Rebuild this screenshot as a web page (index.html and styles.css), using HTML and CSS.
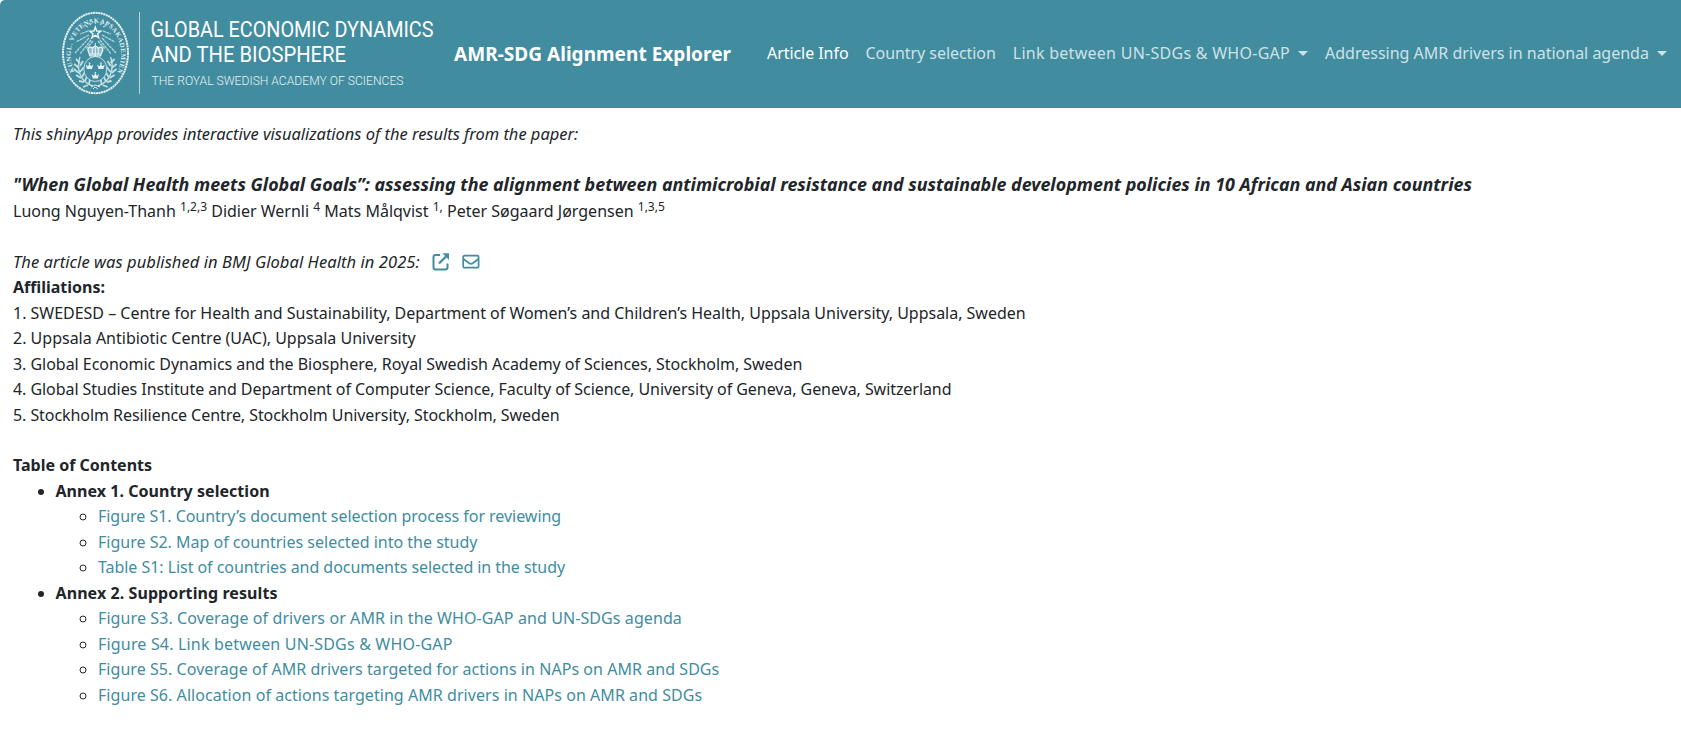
FILE: index.html
```html
<!DOCTYPE html>
<html lang="en">
<head>
<meta charset="utf-8">
<title>AMR-SDG Alignment Explorer</title>
<link rel="stylesheet" href="styles.css">
</head>
<body>
<header class="navbar">
  <svg class="logo" viewBox="55 0 385 108" width="385" height="108">
    <defs>
      <path id="ring" d="M74.500 71.500A25.200 32 0 1 1 117.500 71.500"/>
      <g id="crown"><path d="M-3.800-2-2.500 2.400H2.500L3.800-2 1.500-.2 0-2.800-1.500-.2Z"/><path d="M0-4.200V-2M-1-3.200H1" stroke="#e4f1f4" stroke-width=".7"/></g>
      <g id="wreath" fill="none" stroke="#c3e0e6">
        <path d="M80 57C76 69 80 82 93 86" stroke-width="1.400"/>
        <path d="M80 63l-4-4M79 68l-5-4M79 73l-5-4M81 78l-5-3M84 82l-5-1M88 85l-5 2M80 66l3-5M80 72l4-5M82 77l3-5M85 81l2-5M89 84l1-5" stroke-width="1.800"/>
      </g>
    </defs>
    <ellipse cx="95.500" cy="53" rx="32.500" ry="40.200" fill="none" stroke="#e4f1f4" stroke-width="2" stroke-dasharray="2.100 .5"/>
    <text class="seal-text"><textPath href="#ring" textLength="125">KUNGL. VETENSKAPSAKADEMIEN</textPath></text>
    <g stroke="#b5d5dc" stroke-width="1.300" stroke-dasharray="3 .6">
      <path d="M89 35 76 42M89 38 75 53M91 40 80 54M93 41 86 49M102 35 115 42M102 38 116 53M100 40 111 54M98 41 105 49M88 31 80 34M103 31 111 34M88 27 84 25M103 27 107 25M91 25l-2-2M100 25l2-2M95.500 24v-2"/>
    </g>
    <path d="M95.300 27 96.700 31 101 31.100 97.600 33.700 98.800 37.800 95.300 35.300 91.800 37.800 93 33.700 89.600 31.100 93.900 31Z" fill="#418c9f" stroke="#f2fafb" stroke-width="1.300"/>
    <use href="#wreath"/><use href="#wreath" transform="matrix(-1 0 0 1 190.600 0)"/>
    <ellipse cx="95.300" cy="69" rx="11.500" ry="12.500" fill="#418c9f" stroke="#c3e0e6"/>
    <path d="M90 56 87.800 50C88 47 91 46 92.500 48.500 93 45.500 97.500 45.500 98.200 48.500 100 46 103 47 102.800 50L100.500 56Z" fill="#8ebdc8" stroke="#e9f5f7" stroke-width="1.200"/>
    <path d="M95.300 43v13M92.300 48v6M98.300 48v6M90 54h10.500" stroke="#e9f5f7"/>
    <g fill="#e4f1f4"><use href="#crown" x="89.500" y="66.500"/><use href="#crown" x="101" y="66.500"/><use href="#crown" x="95.300" y="76"/></g>
    <path d="M91 87l4-2 5 2M93 89l2-2 3 2" fill="none" stroke="#d3e8ed"/>
    <path d="M139.500 12V94" stroke="#b5d5dc"/>
    <text class="logo-main" x="150.500" y="37" textLength="283" lengthAdjust="spacingAndGlyphs">GLOBAL ECONOMIC DYNAMICS</text>
    <text class="logo-main" x="151" y="62" textLength="195" lengthAdjust="spacingAndGlyphs">AND THE BIOSPHERE</text>
    <text class="logo-sub" x="151.500" y="85" textLength="252" lengthAdjust="spacingAndGlyphs">THE ROYAL SWEDISH ACADEMY OF SCIENCES</text>
  </svg>
  <span class="brand">AMR-SDG Alignment Explorer</span>
  <nav class="nav">
    <a class="nav-link active n1">Article Info</a>
    <a class="nav-link n2">Country selection</a>
    <a class="nav-link dropdown n3">Link between UN-SDGs &amp; WHO-GAP</a>
    <a class="nav-link dropdown n4">Addressing AMR drivers in national agenda</a>
  </nav>
</header>
<main class="content">
  <p class="line intro"><em>This shinyApp provides interactive visualizations of the results from the paper:</em></p>
  <h1 class="line title">"When Global Health meets Global Goals”: assessing the alignment between antimicrobial resistance and sustainable development policies in 10 African and Asian countries</h1>
  <p class="line authors">Luong Nguyen-Thanh <sup>1,2,3</sup> Didier Wernli <sup>4</sup> Mats Målqvist <sup>1,</sup> Peter Søgaard Jørgensen <sup>1,3,5</sup></p>
  <p class="line published"><em>The article was published in BMJ Global Health in 2025:</em>
    <svg class="icon" viewBox="0 0 18 18" width="18" height="18" fill="none" stroke="#418c9f" stroke-width="2"><path d="M8 2H3.500Q1.500 2 1.500 4V14.500Q1.500 16.500 3.500 16.500H13.500Q15.500 16.500 15.500 14.500V10.500"/><path d="M7 10.500 14 3.500" stroke-width="2.300"/><path d="M10.500.3H17V7Z" fill="#418c9f" stroke="none"/></svg>
    <svg class="icon" viewBox="0 0 18 18" width="18" height="18" fill="none" stroke="#418c9f" stroke-width="1.700"><rect x="1.200" y="2.700" width="15.400" height="12" rx="1.300"/><path d="M1.500 6 7.200 10.300Q9 11.500 10.700 10.300L16.500 6"/></svg>
  </p>
  <h2 class="line a0">Affiliations:</h2>
  <p class="line a1">1. SWEDESD – Centre for Health and Sustainability, Department of Women’s and Children’s Health, Uppsala University, Uppsala, Sweden</p>
  <p class="line a2">2. Uppsala Antibiotic Centre (UAC), Uppsala University</p>
  <p class="line a3">3. Global Economic Dynamics and the Biosphere, Royal Swedish Academy of Sciences, Stockholm, Sweden</p>
  <p class="line a4">4. Global Studies Institute and Department of Computer Science, Faculty of Science, University of Geneva, Geneva, Switzerland</p>
  <p class="line a5">5. Stockholm Resilience Centre, Stockholm University, Stockholm, Sweden</p>
  <h2 class="line toc-title">Table of Contents</h2>
  <ul class="toc">
    <li><b class="t1">Annex 1. Country selection</b>
      <ul>
        <li><a class="s1">Figure S1. Country’s document selection process for reviewing</a></li>
        <li><a class="s2">Figure S2. Map of countries selected into the study</a></li>
        <li><a class="s3">Table S1: List of countries and documents selected in the study</a></li>
      </ul>
    </li>
    <li><b class="t2">Annex 2. Supporting results</b>
      <ul>
        <li><a class="s4">Figure S3. Coverage of drivers or AMR in the WHO-GAP and UN-SDGs agenda</a></li>
        <li><a class="s5">Figure S4. Link between UN-SDGs &amp; WHO-GAP</a></li>
        <li><a class="s6">Figure S5. Coverage of AMR drivers targeted for actions in NAPs on AMR and SDGs</a></li>
        <li><a class="s7">Figure S6. Allocation of actions targeting AMR drivers in NAPs on AMR and SDGs</a></li>
      </ul>
    </li>
  </ul>
</main>
</body>
</html>
```
FILE: styles.css
```css
* { box-sizing: border-box; }
body {
  margin: 0;
  background: #fff;
  color: #212529;
  font: 16px/25.5px "Noto Sans", "Open Sans", sans-serif;
}
.navbar {
  display: flex;
  align-items: center;
  height: 108px;
  padding-left: 55px;
  background: #418c9f;
  border-top-left-radius: 5px;
  white-space: nowrap;
}
.logo { flex: none; overflow: visible; }
.logo-main { font: 400 21.800px Roboto, sans-serif; fill: #fff; }
.logo-sub { font: 300 13.500px Roboto, sans-serif; fill: #e8f3f5; }
.seal-text { font: 700 6.600px "Liberation Serif", serif; fill: #e4f1f4; }
.brand {
  width: 313px;
  margin-left: 14px;
  padding-top: 1px;
  color: #fff;
  font-size: 19px;
  font-weight: 700;
  letter-spacing: .04px;
}
.nav { display: flex; gap: 17px; }
.nav-link { color: #cfe2e6; }
.nav-link.active { color: #fff; }
.n1 { letter-spacing: -.06px; }
.n2 { letter-spacing: -.06px; }
.n3 { letter-spacing: .27px; }
.dropdown::after {
  content: "";
  display: inline-block;
  margin-left: 8px;
  vertical-align: 3px;
  border: 5px solid transparent;
  border-top-color: currentColor;
  border-bottom: 0;
}
.content { padding: 13px 13px 0; white-space: nowrap; }
.line { margin: 0; font-size: 16px; }
.intro { margin-bottom: 25.5px; font-size: 16.450px; }
.title { font-size: 17.870px; font-style: italic; font-weight: 700; }
.authors { line-height: 26.5px; margin-bottom: 25px; }
sup { font-size: 12px; line-height: 0; position: relative; top: -6px; vertical-align: baseline; }
.published {
  display: flex;
  align-items: center;
  gap: 12px;
  height: 26px;
  font-size: 16.500px;
  letter-spacing: .07px;
}
.a1 { letter-spacing: -.017px; }
.a3 { letter-spacing: -.033px; }
.a4 { letter-spacing: -.062px; }
.a5 { margin-bottom: 25px; letter-spacing: -.065px; }
.toc, .toc ul { margin: 0; }
.toc { padding-left: 42.500px; }
.toc ul { padding-left: 42.500px; }
.toc a { color: #418c9f; }
.t1 { letter-spacing: .04px; }
.t2 { letter-spacing: .08px; }
.s1 { letter-spacing: -.035px; }
.s3 { letter-spacing: -.05px; }
.s4 { letter-spacing: .095px; }
.s5 { letter-spacing: .18px; }
.s6 { letter-spacing: .05px; }
.s7 { letter-spacing: .055px; }
```
